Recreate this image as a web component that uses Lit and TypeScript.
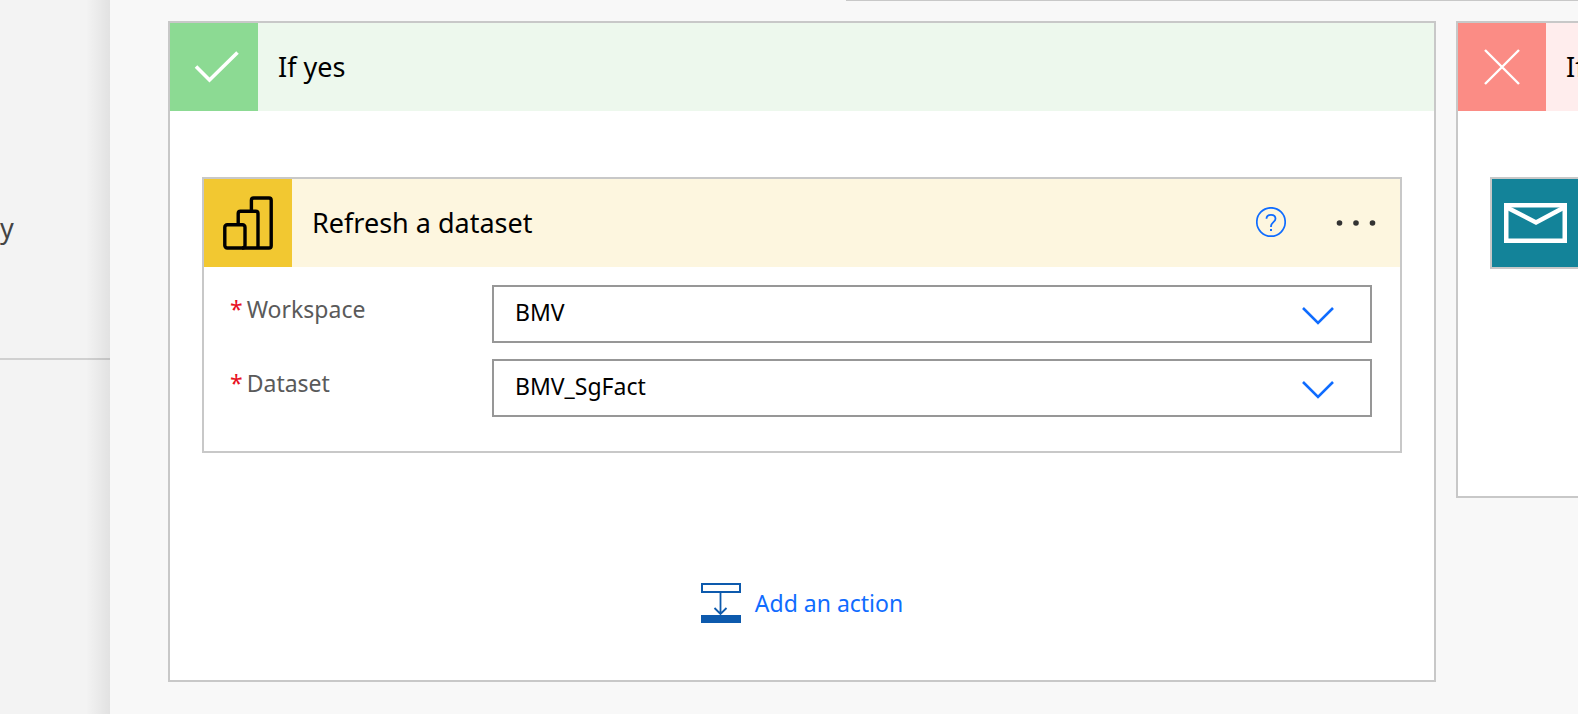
import { LitElement, html, css, svg } from "lit";
import { customElement, property } from "lit/decorators.js";

const checkIcon = svg`<svg width="88" height="88" viewBox="0 0 88 88" fill="none" stroke="#fff" stroke-width="3.600" aria-hidden="true"><path d="M26 43.500L39.500 57L67.500 29.500"/></svg>`;
const crossIcon = svg`<svg width="88" height="88" viewBox="0 0 88 88" fill="none" stroke="#fff" stroke-width="2.400" aria-hidden="true"><path d="M27 27L61 61M61 27L27 61"/></svg>`;
const barsIcon = svg`<svg width="88" height="88" viewBox="0 0 88 88" fill="none" stroke="#000" stroke-width="3.400" stroke-linejoin="round" aria-hidden="true">
  <rect x="20.800" y="45.800" width="20.200" height="23.200" rx="2.500"/>
  <path d="M34.200 45V34.500a2.200 2.200 0 0 1 2.200-2.200h15.400a2.200 2.200 0 0 1 2.200 2.200V69"/>
  <path d="M47.400 32V21.200a2.200 2.200 0 0 1 2.200-2.200h15.400a2.200 2.200 0 0 1 2.200 2.200V66.800a2.200 2.200 0 0 1-2.200 2.200H38"/>
</svg>`;
const mailIcon = svg`<svg width="88" height="88" viewBox="0 0 88 88" fill="none" stroke="#fff" aria-hidden="true">
  <path stroke-width="4.500" d="M14.250 26.250H72.750V61.750H14.250z"/><path stroke-width="4.500" d="M15 28.500L44 43.500L72 28.500"/>
</svg>`;
const helpIcon = svg`<svg width="30" height="32" viewBox="0 0 30 32" fill="none" stroke="#0f6cff" aria-hidden="true">
  <circle cx="15" cy="15" r="14.200" stroke-width="1.700"/>
  <path stroke-width="1.800" d="M10.500 11.800C10.500 9.200 12.400 7.800 15 7.800s4.500 1.500 4.500 4c0 3.200-4.500 3.600-4.500 7.400V20"/>
  <path stroke-width="2" d="M14 23H16"/>
</svg>`;
const moreIcon = svg`<svg width="40" height="8" viewBox="0 0 40 8" fill="#333" aria-hidden="true">
  <circle cx="3.500" cy="4" r="2.800"/><circle cx="20" cy="4" r="2.800"/><circle cx="36.500" cy="4" r="2.800"/>
</svg>`;
const chevronIcon = svg`<svg width="32" height="18" viewBox="0 0 32 18" fill="none" stroke="#0f6cff" stroke-width="2.600" aria-hidden="true"><path d="M1 1L16 16L31 1"/></svg>`;
const insertIcon = svg`<svg width="40" height="40" viewBox="0 0 40 40" fill="none" stroke="#0d5aad" aria-hidden="true">
  <rect x="1" y="1" width="38" height="8" stroke-width="2"/><path stroke-width="1.800" d="M19.500 10V31M13.500 25L19.500 31L25.500 25"/>
  <rect y="32" width="40" height="8" fill="#0d5aad" stroke="none"/>
</svg>`;

@customElement("flow-select")
class FlowSelect extends LitElement {
  @property() label = "";
  @property() value = "";

  static styles = css`
    :host { display: block; }
    .row { display: grid; grid-template-columns: 262px minmax(0, 1fr); align-items: start; }
    .label { display: flex; gap: 4px; padding-top: 8px; font-size: 23px; line-height: 32px; color: #5a5a5a; }
    .star { color: #e81123; }
    .box { position: relative; }
    .select {
      appearance: none; display: block; box-sizing: border-box; width: 100%; height: 58px;
      padding: 0 80px 4px 21px; border: 2px solid #979797; border-radius: 0;
      background: #fff; color: #000; font: inherit; font-size: 23px;
    }
    .chevron { position: absolute; right: 38px; top: 22px; display: flex; pointer-events: none; }
  `;

  render() {
    return html`<div class="row">
      <label class="label" for="field"><span class="star">*</span>${this.label}</label>
      <div class="box">
        <select class="select" id="field" required><option>${this.value}</option></select>
        <span class="chevron">${chevronIcon}</span>
      </div>
    </div>`;
  }
}

@customElement("app-root")
class AppRoot extends LitElement {
  static styles = css`
    :host {
      display: block; height: 100vh; overflow: hidden; background: #f8f8f8; color: #000;
      font-family: "Noto Sans", Tahoma, sans-serif;
    }
    .page { display: grid; grid-template-columns: 110px minmax(0, 1fr); height: 100%; }
    .side { position: relative; background: #f3f3f3; }
    .side::after {
      content: ""; position: absolute; inset: 0 0 0 auto; width: 24px;
      background: linear-gradient(to right, rgba(0, 0, 0, 0), rgba(0, 0, 0, 0.07));
    }
    .entry {
      box-sizing: border-box; height: 360px; padding-top: 212px; border-bottom: 2px solid #d0d0d0;
      font-size: 27px; line-height: 32px; color: #444;
    }
    .condition { height: 1px; margin-left: calc(50% + 2px); background: #c8c8c8; }
    .branches {
      display: grid; grid-template-columns: minmax(0, 1fr) 122px; gap: 20px;
      align-items: start; padding: 20px 0 0 58px;
    }
    .card { border: 2px solid #c8c8c8; background: #fff; }
    .cut { border-right: 0; overflow: hidden; }
    .head { display: flex; align-items: center; height: 88px; }
    .tile { display: flex; flex: none; width: 88px; height: 88px; }
    .title { flex: 1; margin: 0; padding-left: 20px; font-size: 27px; line-height: 36px; font-weight: 400; white-space: nowrap; }
    .yes { background: #edf8ed; }
    .yes .tile { background: #8cda93; }
    .no { background: #ffeded; }
    .no .tile { background: #fb8c85; }
    .bi { background: #fdf6df; }
    .bi .tile { background: #f2c831; }
    .mail .tile { background: #138399; }
    .body { padding: 66px 32px 0; }
    .cut .body { padding: 66px 0 227px 32px; }
    .tools { display: flex; align-items: center; gap: 50px; padding-right: 24px; }
    .icon-button { display: flex; padding: 0; border: 0; background: none; cursor: pointer; }
    .fields { display: grid; gap: 16px; padding: 18px 28px 34px 26px; }
    .footer { display: flex; justify-content: center; padding: 130px 0 57px; }
    .add {
      display: flex; align-items: center; gap: 14px; padding: 0; border: 0; background: none;
      color: #0f6cff; font: inherit; font-size: 23px; line-height: 40px; cursor: pointer;
    }
  `;

  render() {
    return html`<div class="page">
      <aside class="side"><div class="entry">y</div></aside>
      <main>
        <div class="condition"></div>
        <div class="branches">
          <section class="card">
            <header class="head yes"><span class="tile">${checkIcon}</span><h2 class="title">If yes</h2></header>
            <div class="body">
              <article class="card">
                <header class="head bi">
                  <span class="tile">${barsIcon}</span>
                  <h3 class="title">Refresh a dataset</h3>
                  <div class="tools">
                    <button class="icon-button" aria-label="Help">${helpIcon}</button>
                    <button class="icon-button" aria-label="More">${moreIcon}</button>
                  </div>
                </header>
                <div class="fields">
                  <flow-select label="Workspace" value="BMV"></flow-select>
                  <flow-select label="Dataset" value="BMV_SgFact"></flow-select>
                </div>
              </article>
              <div class="footer"><button class="add">${insertIcon}<span>Add an action</span></button></div>
            </div>
          </section>
          <section class="card cut">
            <header class="head no"><span class="tile">${crossIcon}</span><h2 class="title">If no</h2></header>
            <div class="body">
              <article class="card cut"><header class="head mail"><span class="tile">${mailIcon}</span></header></article>
            </div>
          </section>
        </div>
      </main>
    </div>`;
  }
}
